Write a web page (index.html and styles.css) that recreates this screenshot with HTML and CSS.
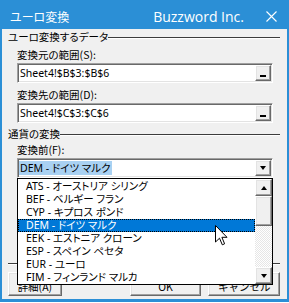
FILE: index.html
```html
<!DOCTYPE html>
<html lang="ja">
<head>
<meta charset="utf-8">
<title>ユーロ変換</title>
<link rel="stylesheet" href="styles.css">
</head>
<body>
<div class="window">
  <div class="titlebar">
    <span class="title">ユーロ変換</span>
    <span class="brand">Buzzword Inc.</span>
    <svg class="close" width="11" height="11" viewBox="0 0 11 11"><path d="M0.5 0.5 L10.5 10.5 M10.5 0.5 L0.5 10.5" stroke="#fff" stroke-width="1.1" fill="none"/></svg>
  </div>
  <div class="client">
    <div class="legend"><span class="legend-text">ユーロ変換するデータ</span><i class="rule"></i></div>
    <div class="field">
      <div class="label">変換元の範囲(S):</div>
      <div class="textbox"><span class="value">Sheet4!$B$3:$B$6</span><span class="btn3d refbtn"><i class="bar"></i></span></div>
    </div>
    <div class="field field-next">
      <div class="label">変換先の範囲(D):</div>
      <div class="textbox"><span class="value">Sheet4!$C$3:$C$6</span><span class="btn3d refbtn"><i class="bar"></i></span></div>
    </div>
    <div class="legend legend-2"><span class="legend-text">通貨の変換</span><i class="rule"></i></div>
    <div class="field">
      <div class="label label-f">変換前(F):</div>
      <div class="textbox combo"><span class="value"><span class="inactive-sel">DEM - ドイツ マルク</span></span><span class="btn3d dropbtn"><i class="tri-down"></i></span></div>
    </div>
    <div class="frame-body"></div>
    <div class="frame-bottom"></div>
    <div class="buttons">
      <button class="btn3d cmd cmd-detail">詳細(A)</button>
      <button class="btn3d cmd cmd-ok">OK</button>
      <button class="btn3d cmd cmd-cancel">キャンセル</button>
    </div>
  </div>

  <div class="dropdown">
    <ul class="items">
      <li class="item">ATS - オーストリア シリング</li>
      <li class="item">BEF - ベルギー フラン</li>
      <li class="item">CYP - キプロス ポンド</li>
      <li class="item sel">DEM - ドイツ マルク</li>
      <li class="item">EEK - エストニア クローン</li>
      <li class="item">ESP - スペイン ペセタ</li>
      <li class="item">EUR - ユーロ</li>
      <li class="item">FIM - フィンランド マルカ</li>
    </ul>
    <div class="scrollbar">
      <span class="btn3d sbtn"><i class="tri-up"></i></span>
      <span class="btn3d thumb"></span>
      <span class="track"></span>
      <span class="btn3d sbtn"><i class="tri-down"></i></span>
    </div>
  </div>

  <svg class="cursor" width="13" height="21" viewBox="0 0 13 21">
    <path d="M0.5 0.5 L0.5 17 L4.5 13.2 L7.3 19.8 L9.6 18.8 L6.9 12.3 L12 12.3 Z" fill="#fff" stroke="#000" stroke-width="1" stroke-linejoin="miter"/>
  </svg>
</div>
</body>
</html>
```

FILE: styles.css
```css
* { box-sizing: border-box; }
html, body { margin: 0; padding: 0; }
body {
  width: 289px;
  height: 303px;
  overflow: hidden;
  background: #ffffff;
  font-family: "Noto Sans", "Noto Sans CJK JP", sans-serif;
  color: #000;
}
.window {
  position: relative;
  width: 289px;
  height: 302px;
  display: flex;
  flex-direction: column;
}
.titlebar {
  height: 29px;
  flex: none;
  background: #2b8fd6;
  color: #fff;
  display: flex;
  align-items: center;
  padding: 4px 12px 0 10px;
}
.title {
  font-family: "Noto Sans CJK JP", sans-serif;
  font-size: 12px;
  font-feature-settings: "palt" 1;
}
.brand {
  margin-left: auto;
  margin-right: 22px;
  font-family: "Open Sans", "Noto Sans", sans-serif;
  font-size: 14px;
}
.close { display: block; }

.client {
  flex: 1;
  background: #f0f0f0;
  border: 2px solid #2b8fd6;
  border-top: 0;
  border-bottom-width: 3px;
  padding: 0 7px 0 6px;
  display: flex;
  flex-direction: column;
}
.legend {
  height: 16px;
  display: flex;
  align-items: center;
  font-family: "Noto Sans CJK JP", sans-serif;
  font-size: 10.5px;
  font-feature-settings: "palt" 1;
}
.legend-2 { margin-top: 3px; }
.legend-text { line-height: 16px; }
.rule {
  flex: 1;
  height: 2px;
  margin-top: 1px;
  border-top: 1px solid #3c3c3c;
  border-bottom: 1px solid #ffffff;
}
.field { margin-left: 9px; width: 256px; }
.field-next { margin-top: 2px; }
.label {
  padding-top: 2px;
  line-height: 16px;
  font-family: "Noto Sans CJK JP", sans-serif;
  font-size: 10.5px;
  font-feature-settings: "palt" 1;
}
.label-f { padding-top: 0; }
.textbox {
  height: 20px;
  display: flex;
  align-items: center;
  background: #fff;
  border: 1px solid;
  border-color: #a0a0a0 #ffffff #ffffff #a0a0a0;
  box-shadow: inset 1px 1px 0 #696969, inset -1px -1px 0 #e3e3e3;
  padding: 0 1px 0 2px;
}
.value {
  flex: 1;
  font-size: 10.5px;
  line-height: 14px;
  white-space: nowrap;
  font-feature-settings: "palt" 1;
}
.inactive-sel {
  background: #a9d1f2;
  padding: 0 2px 0 1px;
  margin-left: -1px;
}
.btn3d {
  background: #f0f0f0;
  border: 1px solid;
  border-color: #ffffff #696969 #696969 #ffffff;
  box-shadow: inset -1px -1px 0 #a0a0a0, inset 1px 1px 0 #e3e3e3;
}
.refbtn, .dropbtn {
  width: 16px;
  height: 16px;
  display: flex;
  justify-content: center;
  align-items: center;
}
.bar {
  display: block;
  width: 6px;
  height: 2px;
  background: #000;
  margin-top: 6px;
}
.tri-down, .tri-up {
  display: block;
  width: 0;
  height: 0;
  border-left: 3.5px solid transparent;
  border-right: 3.5px solid transparent;
}
.tri-down { border-top: 4px solid #000; }
.tri-up { border-bottom: 4px solid #000; }

.frame-body { height: 85px; }
.frame-bottom {
  height: 2px;
  border-top: 1px solid #3c3c3c;
  border-bottom: 1px solid #ffffff;
}
.buttons {
  margin-top: 7px;
  display: flex;
  align-items: flex-start;
}
.cmd {
  height: 24px;
  padding: 5px 0 0 0;
  font-family: "Noto Sans CJK JP", sans-serif;
  font-size: 10.5px;
  line-height: 14px;
  color: #000;
}
.cmd-detail { width: 54px; }
.cmd-ok { width: 72px; margin-left: 68px; }
.cmd-cancel { width: 72px; margin-left: 7px; }

.dropdown {
  position: absolute;
  left: 17px;
  top: 178px;
  width: 256px;
  height: 107px;
  background: #fff;
  border: 1px solid #000;
  display: flex;
}
.items {
  flex: 1;
  list-style: none;
  margin: 0;
  padding: 1px 0 0 0;
  overflow: hidden;
}
.item {
  height: 13px;
  line-height: 13px;
  padding-left: 8px;
  font-size: 10.5px;
  white-space: nowrap;
  font-feature-settings: "palt" 1;
}
.item.sel {
  background: #0078d7;
  color: #fff;
  outline: 1px dotted #000;
  outline-offset: -1px;
}
.scrollbar {
  width: 17px;
  display: flex;
  flex-direction: column;
}
.sbtn {
  height: 17px;
  display: flex;
  justify-content: center;
  align-items: center;
}
.thumb { height: 30px; }
.track {
  flex: 1;
  background: repeating-conic-gradient(#e6e6e6 0 25%, #ffffff 0 50%) 0 0 / 2px 2px;
}
.cursor {
  position: absolute;
  left: 215px;
  top: 225px;
}
```
